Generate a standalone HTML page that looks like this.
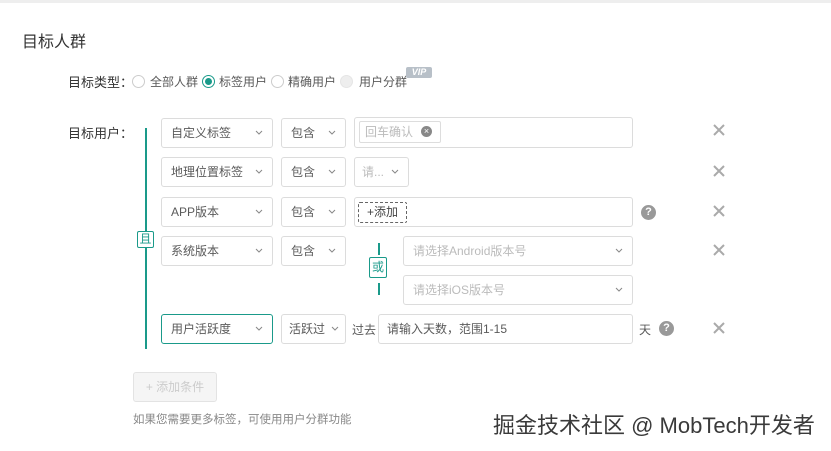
<!DOCTYPE html>
<html><head><meta charset="utf-8"><style>
*{box-sizing:border-box;margin:0;padding:0}
body{width:831px;height:451px;background:#fff;position:relative;overflow:hidden;font-family:"Liberation Sans","Noto Sans CJK SC",sans-serif;font-size:12px;color:#5a5a5a}
.a{position:absolute}
.top{left:0;top:0;width:831px;height:3px;background:#eee}
.sel{position:absolute;height:30px;border:1px solid #dcdcdc;border-radius:3px;background:#fff;padding-left:9px;line-height:28px;color:#5a5a5a}
.sel .ar{position:absolute;right:8px;top:0;width:10px;height:28px}
.ph{color:#bbb}
.rad{position:absolute;width:13px;height:13px;border:1px solid #ccc;border-radius:50%;background:#fff}
.x{position:absolute;width:14px;height:14px}
.q{position:absolute;width:15px;height:15px;border-radius:50%;background:#999;color:#fff;font-size:11px;font-weight:bold;text-align:center;line-height:15px}
.gl{position:absolute;background:#1a9a8a}
.box{position:absolute;border:1px solid #1a9a8a;border-radius:2px;color:#1a9a8a;text-align:center;background:#fff;font-size:12px}
</style></head><body>
<div class="a top"></div>
<div class="a" style="left:22px;top:28px;font-size:16px;color:#333">目标人群</div>
<div class="a" style="left:68px;top:72px;font-size:13px;color:#333">目标类型：</div>
<div class="rad" style="left:132px;top:75px"></div><div class="a" style="left:150px;top:73px">全部人群</div>
<div class="rad" style="left:202px;top:75px;border-color:#1a9a8a"><div style="position:absolute;left:2px;top:2px;width:7px;height:7px;border-radius:50%;background:#1a9a8a"></div></div><div class="a" style="left:219px;top:73px">标签用户</div>
<div class="rad" style="left:271px;top:75px"></div><div class="a" style="left:288px;top:73px">精确用户</div>
<div class="rad" style="left:340px;top:75px;background:#eee;border-color:#e5e5e5"></div><div class="a" style="left:359px;top:73px">用户分群</div>
<div class="a" style="left:406px;top:67px;width:26px;height:11px;background:#b8c0c8;border-radius:2px;color:#fff;font-size:9px;font-weight:bold;font-style:italic;text-align:center;line-height:11px">VIP</div>

<div class="a" style="left:68px;top:123px;font-size:13px;color:#333">目标用户：</div>
<div class="gl" style="left:145px;top:128px;width:2px;height:221px"></div>
<div class="box" style="left:137px;top:231px;width:17px;height:17px;line-height:15px">且</div>

<div class="sel" style="left:161px;top:118px;width:112px">自定义标签<svg class="ar" viewBox="0 0 10 28"><path d="M2 12l3 3 3-3" fill="none" stroke="#888" stroke-width="1"/></svg></div>
<div class="sel" style="left:281px;top:118px;width:65px">包含<svg class="ar" viewBox="0 0 10 28"><path d="M2 12l3 3 3-3" fill="none" stroke="#888"/></svg></div>
<div class="sel" style="left:354px;top:117px;width:279px;height:31px"></div>
<div class="a" style="left:359px;top:121px;width:82px;height:22px;border:1px solid #ddd;border-radius:2px;color:#bbb;line-height:20px;padding-left:5px">回车确认</div>
<div class="a" style="left:421px;top:126px;width:11px;height:11px;border-radius:50%;background:#888;color:#fff;font-size:9px;line-height:11px;text-align:center">×</div>

<div class="sel" style="left:161px;top:157px;width:112px">地理位置标签<svg class="ar" viewBox="0 0 10 28"><path d="M2 12l3 3 3-3" fill="none" stroke="#888"/></svg></div>
<div class="sel" style="left:281px;top:157px;width:65px">包含<svg class="ar" viewBox="0 0 10 28"><path d="M2 12l3 3 3-3" fill="none" stroke="#888"/></svg></div>
<div class="sel ph" style="left:354px;top:157px;width:55px;padding-left:7px">请...<svg class="ar" viewBox="0 0 10 28"><path d="M2 12l3 3 3-3" fill="none" stroke="#888"/></svg></div>

<div class="sel" style="left:161px;top:197px;width:112px">APP版本<svg class="ar" viewBox="0 0 10 28"><path d="M2 12l3 3 3-3" fill="none" stroke="#888"/></svg></div>
<div class="sel" style="left:281px;top:197px;width:65px">包含<svg class="ar" viewBox="0 0 10 28"><path d="M2 12l3 3 3-3" fill="none" stroke="#888"/></svg></div>
<div class="sel" style="left:354px;top:197px;width:279px"></div>
<div class="a" style="left:358px;top:202px;width:49px;height:21px;border:1px dashed #666;border-radius:2px;line-height:19px;text-align:center;color:#444">+添加</div>
<div class="q" style="left:641px;top:205px">?</div>

<div class="sel" style="left:161px;top:236px;width:112px">系统版本<svg class="ar" viewBox="0 0 10 28"><path d="M2 12l3 3 3-3" fill="none" stroke="#888"/></svg></div>
<div class="sel" style="left:281px;top:236px;width:65px">包含<svg class="ar" viewBox="0 0 10 28"><path d="M2 12l3 3 3-3" fill="none" stroke="#888"/></svg></div>
<div class="gl" style="left:378px;top:243px;width:2px;height:12px"></div>
<div class="box" style="left:369px;top:257px;width:18px;height:21px;line-height:19px">或</div>
<div class="gl" style="left:378px;top:283px;width:2px;height:12px"></div>
<div class="sel ph" style="left:403px;top:236px;width:230px">请选择Android版本号<svg class="ar" viewBox="0 0 10 28"><path d="M2 12l3 3 3-3" fill="none" stroke="#888"/></svg></div>
<div class="sel ph" style="left:403px;top:275px;width:230px">请选择iOS版本号<svg class="ar" viewBox="0 0 10 28"><path d="M2 12l3 3 3-3" fill="none" stroke="#888"/></svg></div>

<div class="sel" style="left:161px;top:314px;width:112px;border-color:#1a9a8a">用户活跃度<svg class="ar" viewBox="0 0 10 28"><path d="M2 12l3 3 3-3" fill="none" stroke="#888"/></svg></div>
<div class="sel" style="left:281px;top:314px;width:65px;padding-left:7px">活跃过<svg class="ar" style="right:5px" viewBox="0 0 10 28"><path d="M2 12l3 3 3-3" fill="none" stroke="#888"/></svg></div>
<div class="a" style="left:352px;top:321px">过去</div>
<div class="sel" style="left:378px;top:314px;width:255px;padding-left:8px">请输入天数，范围1-15</div>
<div class="a" style="left:639px;top:321px">天</div>
<div class="q" style="left:659px;top:321px">?</div>

<svg class="x" style="left:712px;top:123px" viewBox="0 0 14 14"><path d="M2 2l10 10M12 2L2 12" stroke="#aaa" stroke-width="2"/></svg>
<svg class="x" style="left:712px;top:164px" viewBox="0 0 14 14"><path d="M2 2l10 10M12 2L2 12" stroke="#aaa" stroke-width="2"/></svg>
<svg class="x" style="left:712px;top:204px" viewBox="0 0 14 14"><path d="M2 2l10 10M12 2L2 12" stroke="#aaa" stroke-width="2"/></svg>
<svg class="x" style="left:712px;top:243px" viewBox="0 0 14 14"><path d="M2 2l10 10M12 2L2 12" stroke="#aaa" stroke-width="2"/></svg>
<svg class="x" style="left:712px;top:321px" viewBox="0 0 14 14"><path d="M2 2l10 10M12 2L2 12" stroke="#aaa" stroke-width="2"/></svg>

<div class="a" style="left:133px;top:372px;width:84px;height:30px;border:1px solid #e3e3e3;border-radius:3px;background:#f5f5f5;color:#ccc;line-height:28px;text-align:center">+ 添加条件</div>
<div class="a" style="left:133px;top:411px;color:#888;font-size:11.5px">如果您需要更多标签，可使用用户分群功能</div>
<div class="a" style="left:493px;top:408px;font-size:22px;color:#3a3a3a;text-shadow:0 0 2px #fff;white-space:nowrap">掘金技术社区 @ MobTech开发者</div>
</body></html>
